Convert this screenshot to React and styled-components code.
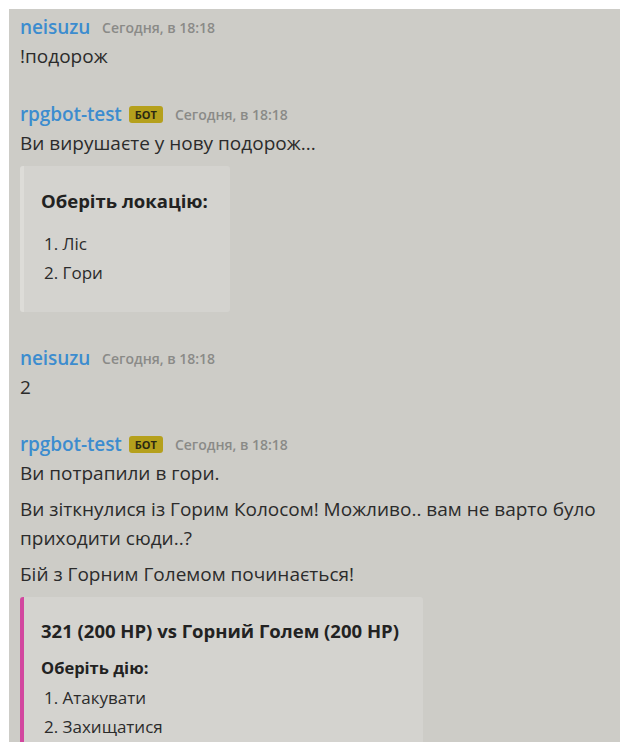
import styled, { createGlobalStyle } from "styled-components";

const GlobalStyle = createGlobalStyle`
  html, body {
    margin: 0;
    padding: 0;
    background: #ffffff;
  }
  body {
    font-family: "Open Sans", "Noto Sans", "DejaVu Sans", sans-serif;
  }
`;

const Page = styled.div`
  padding: 9px 0 0 9px;
  height: 742px;
  box-sizing: border-box;
  overflow: hidden;
`;

const Chat = styled.div`
  background: #cdccc7;
  height: 100%;
  padding: 6px 0 0 11px;
  box-sizing: border-box;
  color: #2b2b2b;
`;

const Message = styled.div`
  margin-bottom: ${(props) => props.$gap || 30}px;
`;

const Header = styled.div`
  display: flex;
  align-items: center;
  height: 24px;
  margin-bottom: 3px;
`;

const Username = styled.span`
  color: #3c8ccf;
  font-size: 19px;
  font-weight: 600;
  letter-spacing: -0.1px;
`;

const BotTag = styled.span`
  background: #b5a01c;
  color: #2a2812;
  font-size: 11px;
  font-weight: 700;
  line-height: 17px;
  padding: 0 6px;
  border-radius: 3px;
  margin-left: 7px;
`;

const Timestamp = styled.span`
  color: #8a8a87;
  font-size: 14px;
  font-weight: 600;
  margin-left: 12px;
`;

const Text = styled.div`
  font-size: 19px;
  line-height: 29px;
  max-width: 590px;

  & + & {
    margin-top: 7px;
  }
`;

const Embed = styled.div`
  display: inline-block;
  margin-top: 8px;
  background: #d4d3cf;
  border-left: 4px solid ${(props) => props.$accent || "#dddcd8"};
  border-radius: 3px;
  padding: ${(props) => props.$padding || "23px 22px 25px 17px"};
`;

const EmbedTitle = styled.div`
  font-weight: 700;
  font-size: ${(props) => props.$size || 18}px;
  line-height: 24px;
  margin-bottom: ${(props) => props.$gap || 0}px;
  color: #222222;
`;

const Field = styled.div`
  font-weight: 700;
  font-size: 16.5px;
  line-height: 24px;
  margin-bottom: 3px;
  color: #222222;
`;

const List = styled.ol`
  margin: 0;
  padding: 0;
  list-style: none;
`;

const Item = styled.li`
  font-size: 17px;
  line-height: 29px;
  padding-left: 3px;
  color: #2b2b2b;
`;

function MessageHeader({ name, bot }) {
  return (
    <Header>
      <Username>{name}</Username>
      {bot && <BotTag>БОТ</BotTag>}
      <Timestamp>Сегодня, в 18:18</Timestamp>
    </Header>
  );
}

export default function App() {
  return (
    <Page>
      <GlobalStyle />
      <Chat>
        <Message $gap={31}>
          <MessageHeader name="neisuzu" />
          <Text>!подорож</Text>
        </Message>

        <Message $gap={34}>
          <MessageHeader name="rpgbot-test" bot />
          <Text>Ви вирушаєте у нову подорож...</Text>
          <Embed>
            <EmbedTitle $size={18.5} $gap={16}>Оберіть локацію:</EmbedTitle>
            <List>
              <Item>1. Ліс</Item>
              <Item>2. Гори</Item>
            </List>
          </Embed>
        </Message>

        <Message $gap={30}>
          <MessageHeader name="neisuzu" />
          <Text>2</Text>
        </Message>

        <Message>
          <MessageHeader name="rpgbot-test" bot />
          <Text>Ви потрапили в гори.</Text>
          <Text>
            Ви зіткнулися із Горим Колосом! Можливо.. вам не варто було
            приходити сюди..?
          </Text>
          <Text>Бій з Горним Големом починається!</Text>
          <Embed $accent="#d2479f" $padding="22px 24px 24px 17px">
            <EmbedTitle $size={18.5} $gap={13}>
              321 (200 HP) vs Горний Голем (200 HP)
            </EmbedTitle>
            <Field>Оберіть дію:</Field>
            <List>
              <Item>1. Атакувати</Item>
              <Item>2. Захищатися</Item>
            </List>
          </Embed>
        </Message>
      </Chat>
    </Page>
  );
}
